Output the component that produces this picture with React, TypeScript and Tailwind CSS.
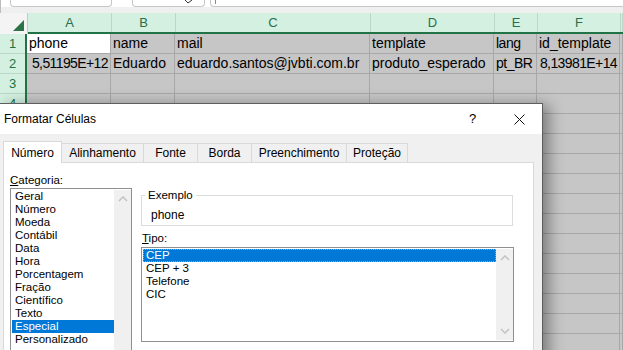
import React from 'react';

// Larguras das colunas da planilha (A..G)
const colWidths = ['w-[84px]', 'w-[64px]', 'w-[195px]', 'w-[124px]', 'w-[43px]', 'w-[83px]', 'flex-1'];
const colLetters = ['A', 'B', 'C', 'D', 'E', 'F', ''];

interface CellData {
  text: string;
  num?: boolean;
}

const sheetRows: CellData[][] = [
  [{ text: 'phone' }, { text: 'name' }, { text: 'mail' }, { text: 'template' }, { text: 'lang' }, { text: 'id_template' }, { text: '' }],
  [
    { text: '5,51195E+12', num: true },
    { text: 'Eduardo' },
    { text: 'eduardo.santos@jvbti.com.br' },
    { text: 'produto_esperado' },
    { text: 'pt_BR' },
    { text: '8,13981E+14', num: true },
    { text: '' },
  ],
];

const TOTAL_ROWS = 16;
// linhas cujo cabeçalho fica visível acima da caixa de diálogo
const VISIBLE_ROW_HEADERS = 4;

const categorias = [
  'Geral', 'Número', 'Moeda', 'Contábil', 'Data', 'Hora', 'Porcentagem',
  'Fração', 'Científico', 'Texto', 'Especial', 'Personalizado',
];
const tipos = ['CEP', 'CEP + 3', 'Telefone', 'CIC'];

const tabs = [
  { name: 'Alinhamento', w: 'w-[82px]' },
  { name: 'Fonte', w: 'w-[54px]' },
  { name: 'Borda', w: 'w-[54px]' },
  { name: 'Preenchimento', w: 'w-[95px]' },
  { name: 'Proteção', w: 'w-[61px]' },
];

const Chevron: React.FC<{ down?: boolean }> = ({ down }) => (
  <svg width="10" height="6" viewBox="0 0 10 6">
    <polyline
      points={down ? '1,1 5,5 9,1' : '1,5 5,1 9,5'}
      fill="none"
      stroke="#c4c4c4"
      strokeWidth="1.6"
    />
  </svg>
);

const Sheet: React.FC = () => {
  const allRows = Array.from({ length: TOTAL_ROWS }, (_, i) => sheetRows[i] ?? colLetters.map(() => ({ text: '' })));

  return (
    <div className="flex flex-col">
      {/* Barra superior (caixa de nome / barra de fórmulas) */}
      <div className="h-[13px] bg-[#efefef] border-l border-[#bdbdbd] flex flex-col">
        <div className="flex h-[7px] bg-white">
          <div className="ml-[9px] w-[102px] h-[7px] border border-t-0 border-[#c6c6c6] rounded-b-[4px] bg-white" />
          <div className="ml-[20px] w-[73px] h-[7px] border border-t-0 border-[#c6c6c6] rounded-b-[4px] bg-white relative">
            <svg className="absolute left-[52px] top-0" width="8" height="4" viewBox="0 0 8 4">
              <polyline points="0,0 3,3 7,0" fill="none" stroke="#333" strokeWidth="1" />
            </svg>
          </div>
          <div className="ml-[5px] flex-1 -mr-[6px] h-[7px] border border-t-0 border-[#c6c6c6] rounded-b-[4px] bg-white relative">
            <div className="absolute left-[4px] top-0 w-px h-[4px] bg-[#8a8a8a]" />
          </div>
        </div>
      </div>

      {/* Cabeçalho das colunas */}
      <div className="flex h-[21px]">
        <div className="w-[28px] h-[21px] bg-[#f4f4f4] border-r border-[#c8c8c8] flex items-end justify-end pr-[3px] pb-[3px]">
          <svg width="11" height="11" viewBox="0 0 11 11">
            <polygon points="11,0 11,11 0,11" fill="#2a7448" />
          </svg>
        </div>
        <div className="flex flex-1 border-b-2 border-[#217346]">
          {colLetters.map((l, i) => (
            <div
              key={i}
              className={`${colWidths[i]} h-[19px] bg-[#d3f0e0] border-r border-[#b9d8c6] flex items-center justify-center text-[13px] text-[#2b6e4d]`}
            >
              {l}
            </div>
          ))}
        </div>
      </div>

      {/* Linhas */}
      {allRows.map((row, r) => (
        <div key={r} className="flex h-[20px]">
          <div className="w-[26px] h-[20px] bg-[#d3f0e0] border-b border-[#b9d8c6] flex items-center justify-center text-[13px] text-[#217346]">
            {r < VISIBLE_ROW_HEADERS ? r + 1 : ''}
          </div>
          <div className="flex flex-1 border-l-2 border-[#217346]">
            {row.map((cell, c) => (
              <div
                key={c}
                className={`${colWidths[c]} h-[20px] border-r border-b border-[#a8a8a8] flex items-center overflow-visible whitespace-nowrap text-[14px] text-black ${
                  r === 0 && c === 0 ? 'bg-white' : 'bg-[#c6c6c6]'
                } ${cell.num ? 'justify-end pr-[2px] text-[13.5px] tracking-[-0.6px]' : 'pl-[2px]'} ${
                  c === 4 ? 'tracking-[-0.5px]' : ''
                }`}
              >
                {cell.text}
              </div>
            ))}
          </div>
        </div>
      ))}
    </div>
  );
};

const FormatDialog: React.FC = () => (
  <div className="absolute left-0 top-[103px] w-[543px] h-[260px] border-t border-r border-[#5e5e5e] bg-[#f0f0f0] shadow-[6px_2px_14px_rgba(0,0,0,0.38)] text-black">
    {/* Barra de título */}
    <div className="h-[30px] bg-white flex items-center pl-[4px] text-[12px]">
      <span className="flex-1">Formatar Células</span>
      <span className="text-[13px] w-[8px]">?</span>
      <svg className="ml-[37px] mr-[17px]" width="11" height="11" viewBox="0 0 11 11">
        <line x1="0.5" y1="0.5" x2="10.5" y2="10.5" stroke="#111" strokeWidth="1" />
        <line x1="10.5" y1="0.5" x2="0.5" y2="10.5" stroke="#111" strokeWidth="1" />
      </svg>
    </div>

    {/* Corpo */}
    <div className="pt-[7px] pl-[3px]">
      {/* Abas */}
      <div className="flex items-end h-[22px] text-[12px]">
        <div className="relative z-10 w-[59px] h-[22px] bg-white border-t border-l border-r border-[#d9d9d9] flex items-center justify-center">
          Número
        </div>
        {tabs.map((t) => (
          <div
            key={t.name}
            className={`${t.w} h-[19px] mb-px border-t border-r border-[#d9d9d9] flex items-center justify-center`}
          >
            {t.name}
          </div>
        ))}
      </div>

      {/* Painel */}
      <div className="relative -mt-px w-[531px] h-[220px] bg-white border border-[#d9d9d9] flex pl-[6px] text-[11.5px]">
        {/* Categoria */}
        <div className="w-[122px] flex flex-col">
          <div className="mt-[11px] h-[13px] leading-[13px]">
            <span className="underline">C</span>ategoria:
          </div>
          <div className="mt-px h-[190px] border border-[#8f8f8f] flex pl-px pt-px">
            <div className="w-[102px] flex flex-col">
              {categorias.map((c) => (
                <div
                  key={c}
                  className={`h-[13px] leading-[13px] pl-[3px] ${c === 'Especial' ? 'bg-[#0078d7] text-white' : ''}`}
                >
                  {c}
                </div>
              ))}
            </div>
            <div className="w-[17px] bg-[#f0f0f0] flex justify-center pt-[6px]">
              <Chevron />
            </div>
          </div>
        </div>

        {/* Exemplo / Tipo */}
        <div className="ml-[9px] w-[373px] flex flex-col">
          <div className="relative mt-[32px] w-[372px] h-[31px] border border-[#dcdcdc] pl-[9px] pt-[12px] text-[12px] leading-[14px]">
            <span className="absolute -top-[7px] left-[3px] bg-white px-[3px] text-[11.5px] leading-[13px]">Exemplo</span>
            phone
          </div>
          <div className="mt-[6px] h-[13px] leading-[13px] pl-px">
            <span className="underline">T</span>ipo:
          </div>
          <div className="mt-[2px] h-[95px] border border-[#8f8f8f] flex pl-px pt-px">
            <div className="w-[353px] flex flex-col">
              {tipos.map((t, i) => (
                <div
                  key={t}
                  className={`h-[13px] leading-[11px] pl-[2px] ${
                    i === 0 ? 'bg-[#0078d7] text-white border border-dotted border-[#e89a3c]' : 'border border-transparent'
                  }`}
                >
                  {t}
                </div>
              ))}
            </div>
            <div className="w-[17px] h-[91px] bg-[#f0f0f0] flex flex-col items-center justify-between pt-[6px] pb-[6px]">
              <Chevron />
              <Chevron down />
            </div>
          </div>
          <div className="mt-[6px] h-[13px] leading-[13px] pl-px">
            <span className="underline">L</span>ocalidade (local):
          </div>
        </div>
      </div>
    </div>
  </div>
);

export default function App() {
  return (
    <div className="relative w-[623px] h-[350px] overflow-hidden bg-white font-['Liberation_Sans',Arial,sans-serif]">
      <Sheet />
      <FormatDialog />
    </div>
  );
}
